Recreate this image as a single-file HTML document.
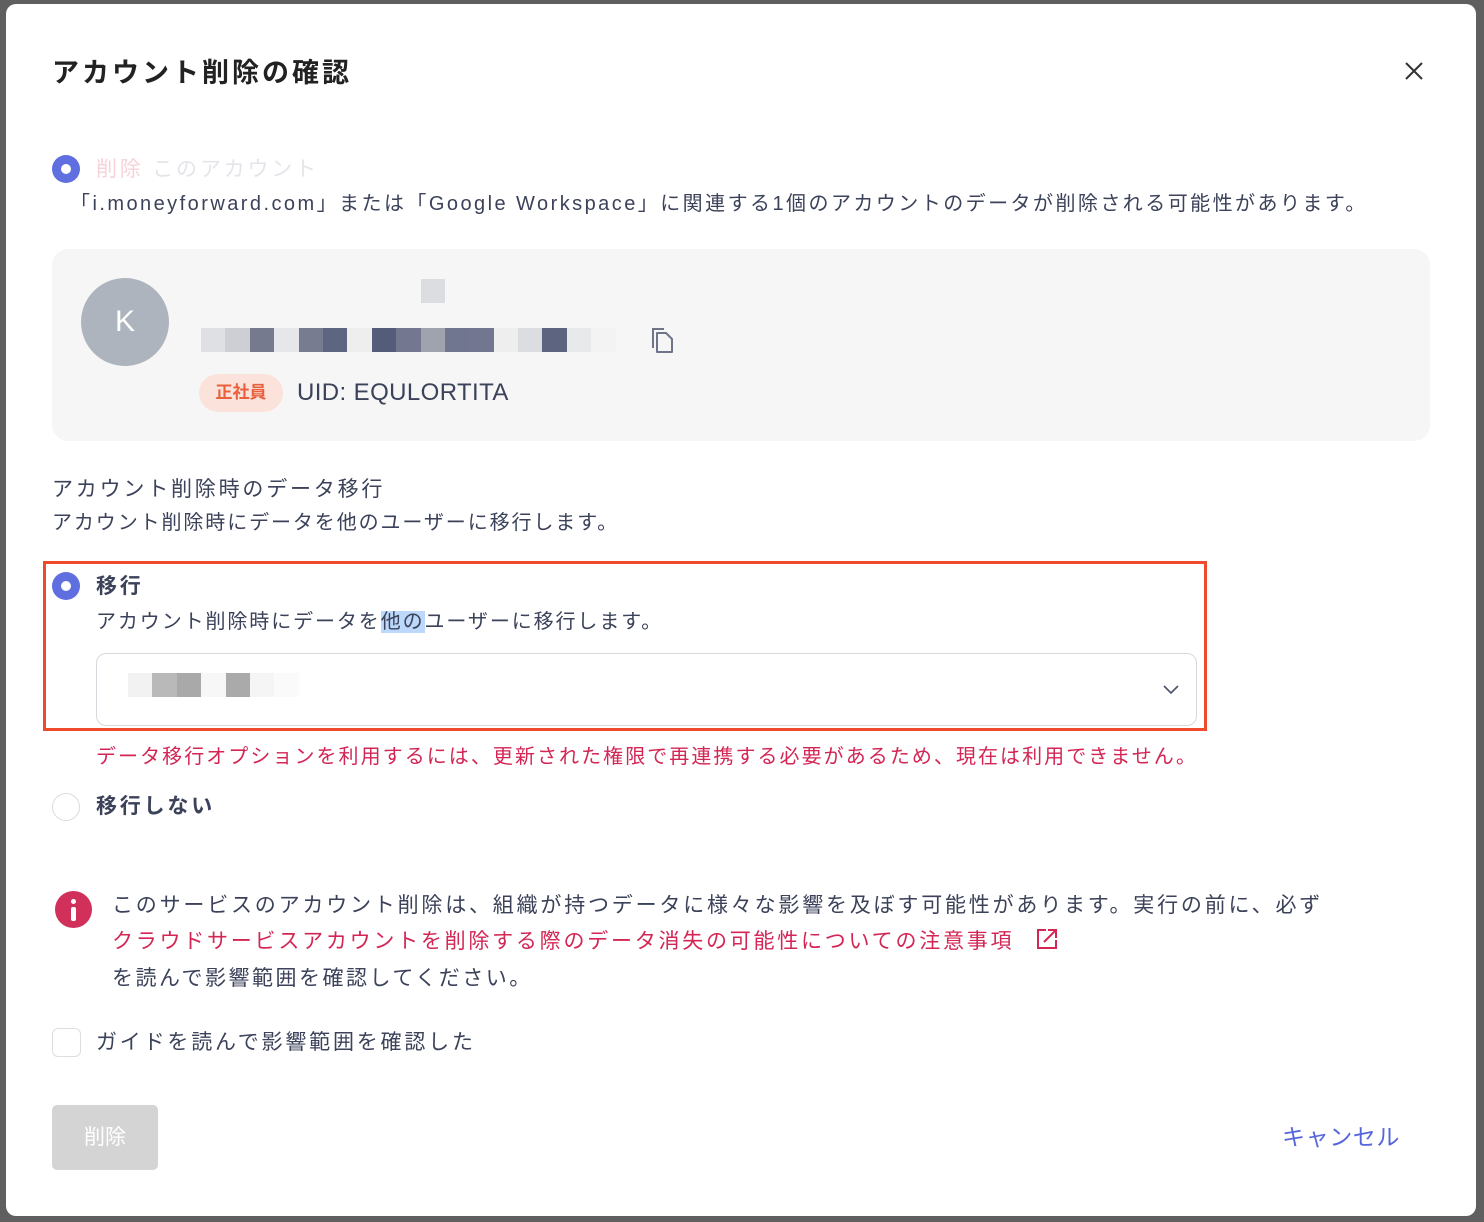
<!DOCTYPE html>
<html><head><meta charset="utf-8"><style>
*{margin:0;padding:0;box-sizing:border-box}
body{width:1484px;height:1222px;background:#5f5f5f;position:relative;overflow:hidden;font-family:"Liberation Sans","Noto Sans CJK JP",sans-serif;color:#3b4259}
.modal{position:absolute;left:6px;top:4px;width:1470px;height:1212px;background:#fff;border-radius:10px}
.a{position:absolute;white-space:nowrap}
.t{font-size:20px;line-height:28px}
.radio{position:absolute;width:28px;height:28px;border-radius:50%}
.on{background:#5f6fe0}
.on::after{content:"";position:absolute;left:9px;top:9px;width:10px;height:10px;border-radius:50%;background:#fff}
.off{border:1.5px solid #d9dbe0;background:#fff}
.px{position:absolute;display:flex}
.px i{display:block;width:24.4px;height:24px}
</style></head><body>
<div class="modal"></div>
<div class="a" style="left:52px;top:55px;font-size:27px;font-weight:bold;color:#222;line-height:36px;letter-spacing:3px">アカウント削除の確認</div>
<svg class="a" style="left:1403px;top:60px" width="22" height="22" viewBox="0 0 22 22"><path d="M3 3L19 19M19 3L3 19" stroke="#333" stroke-width="2"/></svg>

<div class="radio on" style="left:52px;top:155px"></div>
<div class="a t" style="left:96px;top:156px;font-size:21px;letter-spacing:2.8px"><span style="color:#f6d3da">削除</span> <span style="color:#e4e5ea">このアカウント</span></div>
<div class="a t" style="left:70px;top:190px;letter-spacing:2.45px">「i.moneyforward.com」または「Google Workspace」に関連する1個のアカウントのデータが削除される可能性があります。</div>

<div class="a" style="left:52px;top:249px;width:1378px;height:192px;background:#f6f6f6;border-radius:16px"></div>
<div class="a" style="left:81px;top:278px;width:88px;height:88px;border-radius:50%;background:#aeb4bd;color:#fff;font-size:30px;text-align:center;line-height:88px">K</div>
<div class="a" style="left:421px;top:279px;width:24px;height:24px;background:#dcdde1"></div>
<div class="px" style="left:201px;top:328px"><i style="background:#dfe0e4"></i><i style="background:#cdcfd5"></i><i style="background:#757a8e"></i><i style="background:#e6e7ea"></i><i style="background:#777c90"></i><i style="background:#5d6580"></i><i style="background:#eeeeef"></i><i style="background:#545c7a"></i><i style="background:#737890"></i><i style="background:#9fa3ae"></i><i style="background:#707590"></i><i style="background:#737690"></i><i style="background:#eeeeee"></i><i style="background:#dcdde1"></i><i style="background:#5c6480"></i><i style="background:#e8e9eb"></i><i style="background:#f3f3f3"></i></div>
<svg class="a" style="left:650px;top:326px" width="26" height="28" viewBox="0 0 26 28"><path d="M3 22V3H14" fill="none" stroke="#6f7489" stroke-width="2"/><path d="M7 7H16L22 13V26H7Z" fill="none" stroke="#6f7489" stroke-width="2" stroke-linejoin="round"/></svg>
<div class="a" style="left:199px;top:374px;width:84px;height:38px;border-radius:19px;background:#fbe3dc;color:#e8603c;font-size:17px;font-weight:bold;text-align:center;line-height:38px">正社員</div>
<div class="a" style="left:297px;top:377px;font-size:24px;line-height:32px;color:#3b4259;letter-spacing:0.4px">UID: EQULORTITA</div>

<div class="a t" style="left:52px;top:476px;font-size:21px;letter-spacing:2.8px">アカウント削除時のデータ移行</div>
<div class="a t" style="left:52px;top:509px;letter-spacing:1.9px">アカウント削除時にデータを他のユーザーに移行します。</div>

<div class="a" style="left:43px;top:561px;width:1164px;height:170px;border:3px solid #ee4a2c"></div>
<div class="radio on" style="left:52px;top:572px"></div>
<div class="a t" style="left:96px;top:573px;font-size:21px;font-weight:bold;letter-spacing:2.8px">移行</div>
<div class="a t" style="left:96px;top:608px;letter-spacing:1.9px">アカウント削除時にデータを<span style="background:#bcd8fb">他の</span>ユーザーに移行します。</div>
<div class="a" style="left:96px;top:653px;width:1101px;height:73px;border:1px solid #d6d8dd;border-radius:10px;background:#fff"></div>
<div class="px" style="left:128px;top:673px"><i style="background:#f2f2f2"></i><i style="background:#b9b9b9"></i><i style="background:#a9a9a9"></i><i style="background:#f7f7f7"></i><i style="background:#aaaaaa"></i><i style="background:#f5f5f5"></i><i style="background:#fafafa"></i></div>
<svg class="a" style="left:1162px;top:683px" width="18" height="12" viewBox="0 0 18 12"><path d="M2 3L9 10L16 3" fill="none" stroke="#4a5068" stroke-width="1.6"/></svg>

<div class="a t" style="left:96px;top:743px;color:#d32655;letter-spacing:2.05px">データ移行オプションを利用するには、更新された権限で再連携する必要があるため、現在は利用できません。</div>
<div class="radio off" style="left:52px;top:793px"></div>
<div class="a t" style="left:96px;top:793px;font-size:21px;font-weight:bold;letter-spacing:2.8px">移行しない</div>

<div class="a" style="left:55px;top:891px;width:37px;height:37px;border-radius:50%;background:#d0305a"></div>
<div class="a" style="left:71px;top:899px;width:5px;height:5px;background:#fff;border-radius:50%"></div>
<div class="a" style="left:71px;top:907px;width:5px;height:14px;background:#fff;border-radius:2px"></div>
<div class="a t" style="left:112px;top:892px;font-size:21px;letter-spacing:2.8px">このサービスのアカウント削除は、組織が持つデータに様々な影響を及ぼす可能性があります。実行の前に、必ず</div>
<div class="a t" style="left:112px;top:928px;font-size:21px;color:#d32655;letter-spacing:2.76px">クラウドサービスアカウントを削除する際のデータ消失の可能性についての注意事項</div>
<svg class="a" style="left:1035px;top:927px" width="24" height="24" viewBox="0 0 24 24"><path d="M11 3H3V21H21V13" fill="none" stroke="#d32655" stroke-width="2"/><path d="M9 15L20 4M13 3H21V11" fill="none" stroke="#d32655" stroke-width="2"/></svg>
<div class="a t" style="left:112px;top:965px;font-size:21px;letter-spacing:2.5px">を読んで影響範囲を確認してください。</div>

<div class="a" style="left:52px;top:1028px;width:29px;height:29px;border:1.5px solid #dcdee2;border-radius:6px;background:#fff"></div>
<div class="a t" style="left:96px;top:1029px;font-size:21px;letter-spacing:2.8px">ガイドを読んで影響範囲を確認した</div>

<div class="a" style="left:52px;top:1105px;width:106px;height:65px;background:#d4d4d4;border-radius:5px;color:#fff;font-size:21px;text-align:center;line-height:65px">削除</div>
<div class="a t" style="left:1282px;top:1123px;font-size:23px;color:#5566dd;letter-spacing:0.6px">キャンセル</div>
</body></html>
